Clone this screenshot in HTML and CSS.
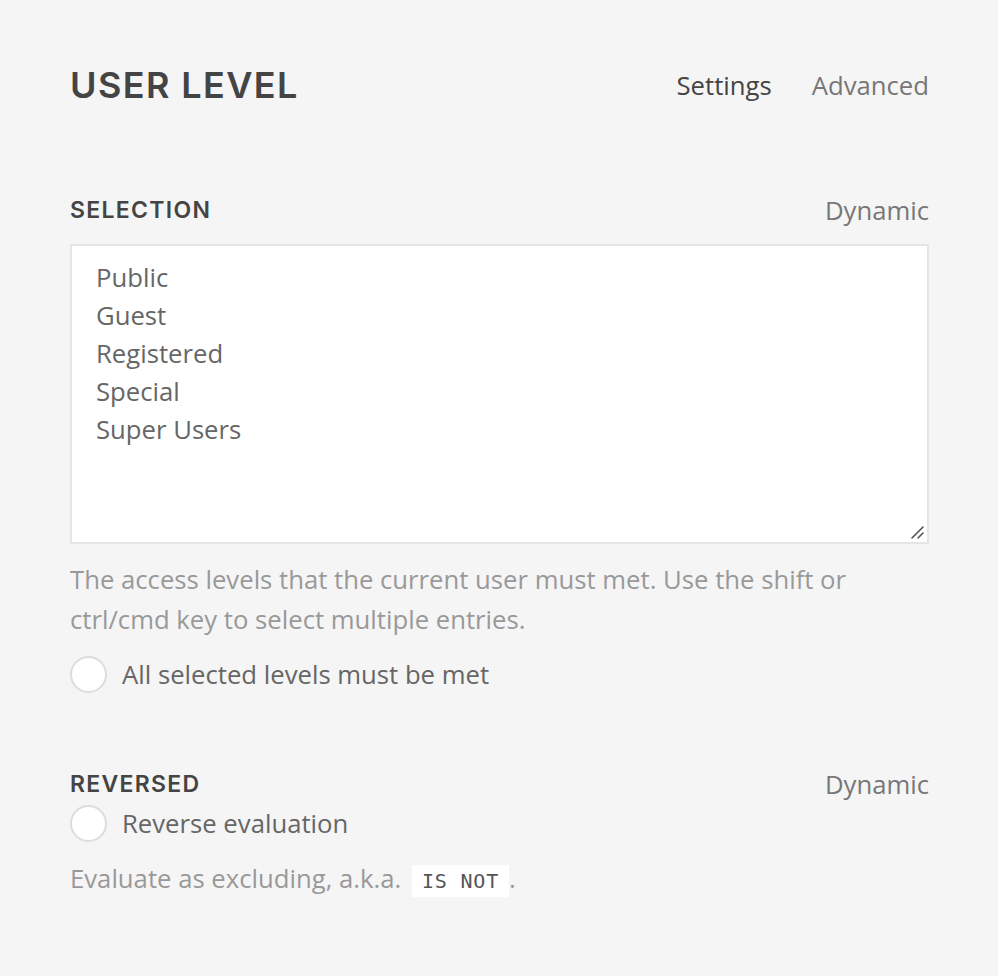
FILE: index.html
```html
<!DOCTYPE html>
<html>
<head>
<meta charset="utf-8">
<link rel="stylesheet" href="styles.css">
</head>
<body>
<div class="panel">
  <header class="top">
    <h1 class="title">USER LEVEL</h1>
    <nav class="tabs">
      <span class="tab active">Settings</span>
      <span class="tab">Advanced</span>
    </nav>
  </header>

  <section class="field field-selection">
    <div class="field-head">
      <h2 class="label">SELECTION</h2>
      <span class="dynamic">Dynamic</span>
    </div>
    <div class="listbox">
      <div class="opt">Public</div>
      <div class="opt">Guest</div>
      <div class="opt">Registered</div>
      <div class="opt">Special</div>
      <div class="opt">Super Users</div>
      <svg class="grip" width="16" height="16" viewBox="0 0 16 16"><path d="M3 14 L14 3 M9 14 L14 9" stroke="#555" stroke-width="1.6" stroke-linecap="round"/></svg>
    </div>
    <p class="help">The access levels that the current user must met. Use the shift or ctrl/cmd key to select multiple entries.</p>
    <label class="check"><span class="circle"></span><span>All selected levels must be met</span></label>
  </section>

  <section class="field field-reversed">
    <div class="field-head">
      <h2 class="label">REVERSED</h2>
      <span class="dynamic">Dynamic</span>
    </div>
    <label class="check tight"><span class="circle"></span><span>Reverse evaluation</span></label>
    <p class="help">Evaluate as excluding, a.k.a. <code class="code">IS NOT</code>.</p>
  </section>
</div>
</body>
</html>
```

FILE: styles.css
```css
html, body {
  margin: 0;
  padding: 0;
  background: #f5f5f5;
}
body {
  font-family: "Open Sans", sans-serif;
  color: #666;
}
.panel {
  padding: 57px 69px 0 70px;
}
.top {
  display: flex;
  justify-content: space-between;
  align-items: center;
  height: 56px;
}
.title {
  margin: 0;
  font-family: "Inter", sans-serif;
  font-weight: 600;
  font-size: 36px;
  color: #444;
  letter-spacing: 1.4px;
}
.tabs {
  display: flex;
  gap: 40px;
  font-size: 25.7px;
}
.tab { color: #777; }
.tab.active { color: #444; }

.field-selection { margin-top: 80px; }
.field-head {
  display: flex;
  justify-content: space-between;
  align-items: center;
  height: 34px;
}
.label {
  margin: 0;
  font-family: "Inter", sans-serif;
  font-weight: 600;
  font-size: 23px;
  color: #444;
  letter-spacing: 1.3px;
}
.dynamic {
  font-size: 25.7px;
  color: #777;
}
.listbox {
  position: relative;
  margin-top: 17px;
  background: #fff;
  border: 2px solid #e5e5e5;
  padding: 13px 24px;
  box-sizing: border-box;
  height: 300px;
}
.opt {
  font-size: 25.7px;
  line-height: 38px;
  color: #666;
}
.grip {
  position: absolute;
  right: 2px;
  bottom: 2px;
}
.help {
  margin: 16px 0 0;
  font-size: 25.7px;
  line-height: 40px;
  color: #999;
}
.check {
  display: flex;
  align-items: center;
  gap: 15px;
  margin-top: 14px;
  font-size: 25.7px;
  color: #666;
  height: 40px;
}
.circle {
  width: 33px;
  height: 33px;
  border: 2px solid #ddd;
  border-radius: 50%;
  background: #fff;
  flex: none;
}
.field-reversed { margin-top: 73px; }
.field-reversed .check { margin-top: 2px; }
.field-reversed .help { margin-top: 16px; }
.code {
  font-family: "DejaVu Sans Mono", monospace;
  font-size: 20px;
  letter-spacing: 0.8px;
  color: #555;
  background: #fff;
  padding: 4px 10px;
  margin-left: 4px;
}
```
